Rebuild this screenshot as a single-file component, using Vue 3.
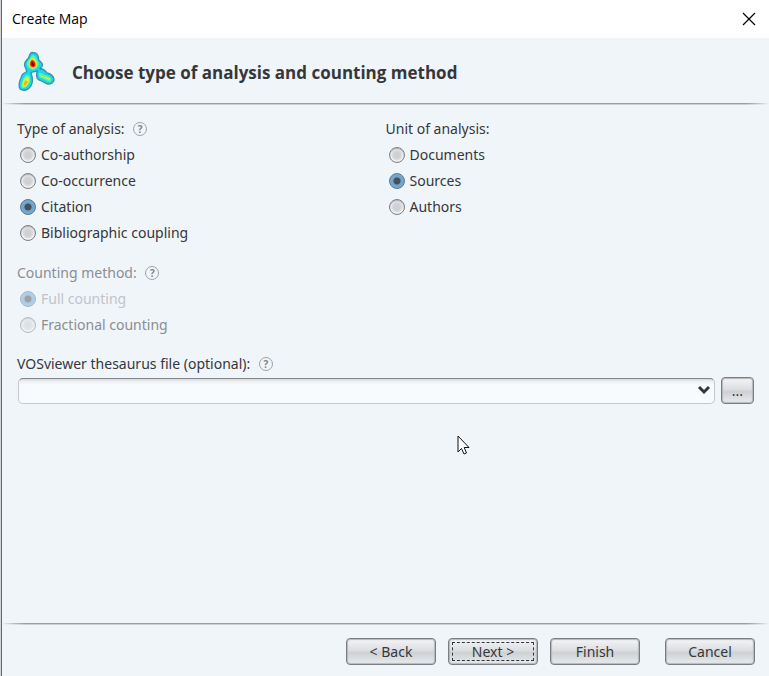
<script setup>
import { ref } from 'vue'

const analysis = ref('Citation')
const unit = ref('Sources')
const counting = ref('Full counting')
const thesaurus = ref('')

const analysisTypes = ['Co-authorship', 'Co-occurrence', 'Citation', 'Bibliographic coupling']
const units = ['Documents', 'Sources', 'Authors']
const countingMethods = ['Full counting', 'Fractional counting']
</script>

<template>
  <div class="dialog">
    <header class="titlebar">
      <span>Create Map</span>
      <button class="close" type="button" aria-label="Close">
        <svg width="14" height="14" viewBox="0 0 14 14">
          <path d="M1 1 L13 13 M13 1 L1 13" stroke="#000" stroke-width="1.2" fill="none" />
        </svg>
      </button>
    </header>

    <div class="heading">
      <svg class="logo" width="46" height="48" viewBox="0 0 46 48" aria-hidden="true">
        <defs>
          <filter id="soft" x="-20%" y="-20%" width="140%" height="140%"><feGaussianBlur stdDeviation="0.6" /></filter>
        </defs>
        <g filter="url(#soft)" stroke-linejoin="round">
          <path fill="#1ad6ec" stroke="#3a8fb0" stroke-width="1.3" d="M18 5.500C16 6 15.500 8 14.500 11C13 13 10.500 14.500 10.500 17.500C10.500 20.500 13 22 12.500 25C9 26 7.500 28 7 31C5 34 4.500 39 6 42C9.500 44.500 14.500 43 16.500 39.500C19 36 18.500 30 17 26C17.500 24.500 20 25.500 23.500 23.500C22 27 22 31.500 25 33C28.500 33.500 30.500 36.500 34 37C37.500 37.500 40.500 35 40 32C39 28.500 35.500 26.500 33 26C31.500 23.500 29 22 26 21.500C26.500 20 29 20 28.500 17.500C28 15 25.500 14.500 24.500 12.500C24.500 9.500 23.500 7 21.500 6Z" />
          <path fill="#5cf4a4" d="M18.500 8C16.500 11 12.800 14 13 17.500C13.500 21 17 23.500 20.500 22.500C24 21 26 17.500 23.800 14C22 11 21.500 8.500 18.500 8ZM12.500 28C9.500 29 7 36 7.500 40.500C10 42.500 14.500 39 16 35C17 30.500 15.500 27 12.500 28ZM25 26C24 29 25.500 31 28 31C31 32 33 35 36.500 34.500C38.500 32 36 29 32.500 28.500C29.500 28 27.500 24.500 25 26Z" />
          <path fill="#d0f53c" d="M18.500 10.500C16 12.500 13.800 16 15 19C16.500 22 20 22 22 20C24 18 23.300 14.500 21 12.500ZM12.500 30C9.500 31.500 8 36 8.500 39.500C10.500 41 14 38.500 15 34.500C15.500 31 14.500 29.500 12.500 30ZM26 28C26 30 28.500 30.500 30.500 30.500C33 32 34.500 33.500 36 32.500C35.500 30.500 32 30.500 30 29.500Z" />
          <path fill="#ffab1c" d="M18 12C16 14 14.800 17 16 19.500C18 22 21.500 21 22.300 18.500C22.500 15.500 20.500 13 18 12ZM12 33.500C10.500 34 9.500 36.500 9.800 38.500C11.500 39 13.500 36.500 13.800 34.500Z" />
          <path fill="#e81a0a" d="M18 13C16.300 14.500 15.500 17 16.800 19C18.500 21 21 20 21.500 18C21.500 15.500 19.800 13.500 18 13Z" />
          <path fill="#8e0000" d="M18 14.500C17 15.500 17 17 18 18.500C19.500 19.500 20.500 18.500 20 17Z" />
        </g>
      </svg>
      <h1>Choose type of analysis and counting method</h1>
    </div>
    <hr class="rule" />

    <main>
      <div class="columns">
        <fieldset>
          <legend>Type of analysis: <i class="help">?</i></legend>
          <label v-for="item in analysisTypes" :key="item">
            <input v-model="analysis" type="radio" name="analysis" :value="item" />{{ item }}
          </label>
        </fieldset>
        <fieldset>
          <legend>Unit of analysis:</legend>
          <label v-for="item in units" :key="item">
            <input v-model="unit" type="radio" name="unit" :value="item" />{{ item }}
          </label>
        </fieldset>
      </div>

      <fieldset class="counting" disabled>
        <legend>Counting method: <i class="help">?</i></legend>
        <label v-for="item in countingMethods" :key="item" :class="{ chosen: counting === item }">
          <input v-model="counting" type="radio" name="counting" :value="item" />{{ item }}
        </label>
      </fieldset>

      <div class="file">
        <div class="file-label">
          <label for="thesaurus">VOSviewer thesaurus file (optional):</label> <i class="help">?</i>
        </div>
        <div class="file-row">
          <div class="combo">
            <select id="thesaurus" v-model="thesaurus"><option value=""></option></select>
            <svg width="14" height="10" viewBox="0 0 14 10" aria-hidden="true">
              <path d="M2 2 L7 7 L12 2" fill="none" stroke="#33363a" stroke-width="3" />
            </svg>
          </div>
          <button class="btn browse" type="button">...</button>
        </div>
      </div>
    </main>

    <hr class="rule" />
    <footer>
      <button class="btn" type="button">&lt; Back</button>
      <button class="btn focused" type="button">Next &gt;</button>
      <button class="btn" type="button">Finish</button>
      <button class="btn cancel" type="button">Cancel</button>
    </footer>

    <svg class="pointer" width="13" height="20" viewBox="0 0 13 20" aria-hidden="true">
      <path d="M1 1 V17 L4.500 13.500 L7 19 L9.500 18 L7.200 12.500 H12 Z" fill="#fff" stroke="#111" stroke-width="1" />
    </svg>
  </div>
</template>

<style>
body {
  margin: 0;
  padding-left: 1px;
  background: #d3d5d6;
}
</style>

<style scoped>
.dialog {
  position: relative;
  box-sizing: border-box;
  min-height: 100vh;
  display: flex;
  flex-direction: column;
  border-left: 1px solid #626569;
  background: #f0f5fa;
  color: #35373b;
  font: 14px/26px "Noto Sans", "Open Sans", sans-serif;
}
.titlebar {
  display: flex;
  align-items: center;
  justify-content: space-between;
  height: 38px;
  padding: 0 13px 0 10px;
  background: #fff;
  color: #000;
  font: 14px/36px "Open Sans", sans-serif;
}
.close {
  display: flex;
  padding: 0;
  border: 0;
  background: none;
}
.heading {
  display: flex;
  align-items: center;
  gap: 12px;
  height: 65px;
  padding-left: 12px;
}
h1 {
  margin: 0;
  padding-top: 4px;
  font: bold 17px/24px "Open Sans", sans-serif;
}
.rule {
  width: 100%;
  height: 2px;
  margin: 0;
  border: 0;
  background: linear-gradient(90deg, transparent, #9b9fa5 3%, #9b9fa5 97%, transparent) top / 100% 1px no-repeat,
    linear-gradient(90deg, transparent, #cdd1d6 3%, #cdd1d6 97%, transparent);
}
main {
  flex: 1;
  padding: 11px 15px 0;
}
.columns {
  display: grid;
  grid-template-columns: 1fr 1fr;
}
fieldset {
  min-width: 0;
  margin: 0;
  padding: 0;
  border: 0;
}
legend {
  padding: 0;
}
fieldset label {
  display: flex;
  align-items: center;
  gap: 5px;
  width: max-content;
  padding-left: 3px;
}
input {
  appearance: none;
  box-sizing: border-box;
  width: 16px;
  height: 16px;
  margin: 0;
  border: 1px solid #7d8085;
  border-radius: 50%;
  background: radial-gradient(circle, #cfd0d2 0 3px, #dddfe2 5px, #f1f2f4 6px);
  box-shadow: inset 0 1px 1px #a7aaae;
}
input:checked {
  border-color: #567894;
  background: radial-gradient(circle, #45505b 0 3px, #6fa2c9 4px, #79aad0 7px);
  box-shadow: none;
}
.help {
  display: inline-block;
  box-sizing: border-box;
  width: 14px;
  height: 14px;
  margin-left: 5px;
  border: 1px solid #a0a3a7;
  border-radius: 50%;
  color: #808387;
  font: bold 10px/12px "Open Sans", sans-serif;
  text-align: center;
  vertical-align: 1px;
}
.counting {
  margin-top: 14px;
  color: #8b8e93;
}
.counting input {
  opacity: 0.5;
}
.counting .chosen {
  color: #c0c4c9;
}
.file {
  margin-top: 13px;
}
.file-row {
  display: flex;
  align-items: center;
  gap: 6px;
}
.combo {
  position: relative;
  flex: 1;
  display: flex;
}
select {
  appearance: none;
  width: 100%;
  height: 26px;
  margin-left: 1px;
  border: 1px solid #c4c7cb;
  border-top-color: #85888d;
  border-radius: 5px;
  background: linear-gradient(#d0d3d7, #eceff2 2px, #f7fbfe 6px);
}
.combo svg {
  position: absolute;
  right: 4px;
  top: 7px;
  pointer-events: none;
}
.btn {
  box-sizing: border-box;
  width: 90px;
  height: 27px;
  padding: 0;
  border: 1px solid #7a7d82;
  border-radius: 4px;
  box-shadow: inset 0 0 1px 1px #b4b7bb;
  background: linear-gradient(#f4f5f7, #dcdee1 45%, #ced1d4 55%, #e9ecef);
  color: #35373b;
  font: 14px/22px "Noto Sans", "Open Sans", sans-serif;
}
.browse {
  width: 33px;
}
.focused {
  outline: 1px dashed #34373b;
  outline-offset: -5px;
}
footer {
  display: flex;
  justify-content: flex-end;
  gap: 12px;
  padding: 13px 14px 11px;
}
.cancel {
  margin-left: 13px;
}
.pointer {
  position: absolute;
  left: 455px;
  top: 435px;
}
</style>
